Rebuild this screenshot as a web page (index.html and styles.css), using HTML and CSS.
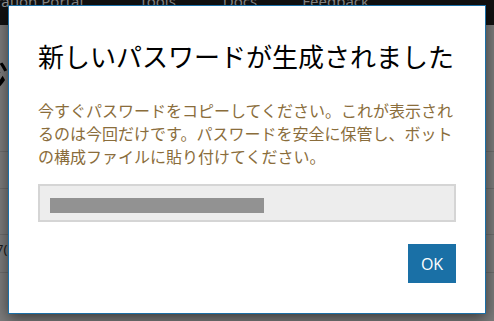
FILE: index.html
```html
<!DOCTYPE html>
<html lang="ja">
<head>
    <meta charset="UTF-8">
    <meta name="viewport" content="width=device-width, initial-scale=1.0">
    <title>新しいパスワード</title>
    <link rel="stylesheet" href="styles.css">
</head>
<body>
    <div class="page">
        <div class="navbar">
            <span class="nav-item brand">Administration Portal</span>
            <span class="nav-item nav-tools">Tools</span>
            <span class="nav-item nav-docs">Docs</span>
            <span class="nav-item">Feedback</span>
        </div>
        <div class="content">
            <div class="page-title">ジ</div>
            <div class="row row-1"></div>
            <div class="row row-2"></div>
            <div class="row row-3"></div>
            <div class="row row-4">7(</div>
        </div>
    </div>

    <div class="modal">
        <h2 class="modal-title">新しいパスワードが生成されました</h2>
        <p class="modal-text">今すぐパスワードをコピーしてください。これが表示されるのは今回だけです。パスワードを安全に保管し、ボットの構成ファイルに貼り付けてください。</p>
        <div class="password-box">
            <span class="redacted"></span>
        </div>
        <div class="modal-footer">
            <button class="btn-ok">OK</button>
        </div>
    </div>
</body>
</html>
```

FILE: styles.css
```css
body {
    margin: 0;
    padding: 0;
    width: 494px;
    height: 321px;
    overflow: hidden;
    background-color: #7c7c7c;
    font-family: "Noto Sans", "Noto Sans CJK JP", sans-serif;
}

.page {
    height: 321px;
}

.navbar {
    height: 25px;
    background-color: #121212;
    display: flex;
    overflow: hidden;
    white-space: nowrap;
}

.nav-item {
    font-size: 15px;
    line-height: 14px;
    margin-top: -6px;
    color: #8d8d8d;
}

.brand {
    margin-left: -67px;
    margin-right: 56px;
}

.nav-tools {
    margin-right: 47px;
}

.nav-docs {
    margin-right: 45px;
}

.content {
    padding-top: 20px;
}

.page-title {
    height: 70px;
    font-size: 50px;
    line-height: 70px;
    color: #000;
    margin-left: -40px;
    font-family: "Noto Sans CJK JP", sans-serif;
}

.row {
    border-bottom: 1px solid #6c6c6c;
}

.row-1 {
    height: 36px;
}

.row-2 {
    height: 36px;
}

.row-3 {
    height: 45px;
}

.row-4 {
    height: 37px;
    line-height: 28px;
    font-size: 13px;
    color: #1a1a1a;
    margin-left: -4px;
}

.modal {
    position: absolute;
    left: 8px;
    top: 5px;
    width: 478px;
    height: 309px;
    box-sizing: border-box;
    background-color: #fff;
    border: 1px solid #1b6fa6;
    box-shadow: 0 4px 14px rgba(0, 0, 0, 0.55);
    padding: 32px 29px 0 29px;
}

.modal-title {
    margin: 0;
    font-size: 26px;
    line-height: 36px;
    font-weight: normal;
    color: #000;
    font-family: "Noto Sans CJK JP", sans-serif;
    white-space: nowrap;
}

.modal-text {
    margin: 25px 0 0 0;
    font-size: 16px;
    line-height: 23px;
    color: #8a6d3b;
    font-family: "Noto Sans CJK JP", sans-serif;
}

.password-box {
    margin-top: 16px;
    height: 38px;
    box-sizing: border-box;
    border: 2px solid #d5d5d5;
    background-color: #ededed;
    padding: 12px 0 0 10px;
}

.redacted {
    display: block;
    width: 214px;
    height: 15px;
    background-color: #929292;
}

.modal-footer {
    display: flex;
    justify-content: flex-end;
    margin-top: 22px;
}

.btn-ok {
    width: 48px;
    height: 39px;
    border: none;
    border-radius: 0;
    padding: 0;
    background-color: #1a70a6;
    color: #fff;
    font-size: 16px;
    font-weight: 500;
    font-family: "Open Sans", sans-serif;
    cursor: pointer;
}
```
